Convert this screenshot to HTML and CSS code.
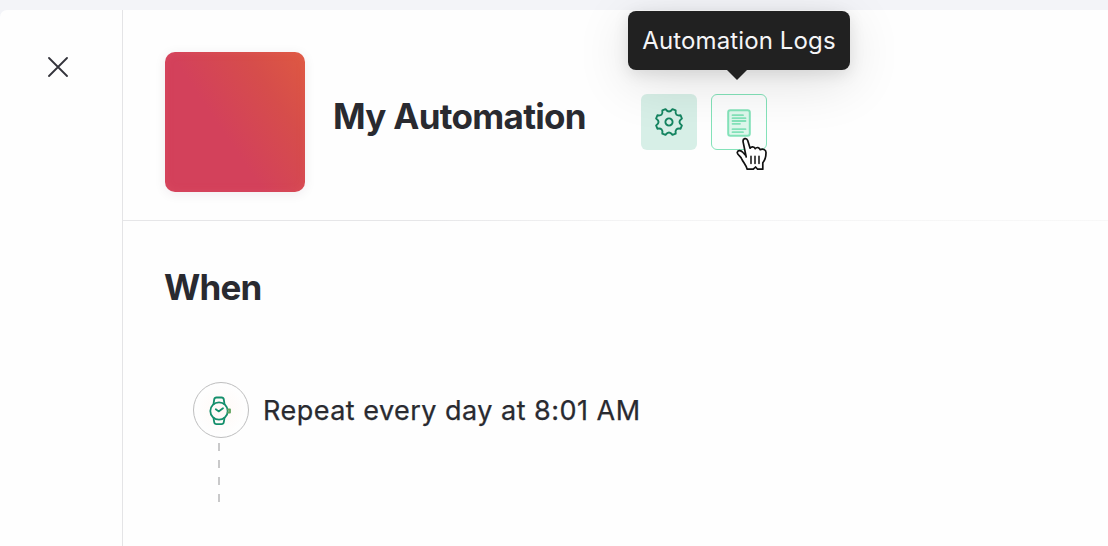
FILE: index.html
```
<!DOCTYPE html>
<html lang="en">
<head>
<meta charset="utf-8">
<title>My Automation</title>
<link rel="stylesheet" href="styles.css">
</head>
<body>
<div class="panel">
  <aside class="sidebar">
    <button class="close" aria-label="Close">
      <svg width="20" height="20" viewBox="0 0 20 20"><path d="M1 1L19 19M19 1L1 19"/></svg>
    </button>
  </aside>
  <main class="content">
    <header class="header">
      <div class="cover"></div>
      <h1 class="title">My Automation</h1>
      <div class="actions">
        <button class="action action-settings" aria-label="Settings">
          <svg width="30" height="30" viewBox="-15 -15 30 30"><path d="M12.9 3.5L11.6 6.7Q5.7 5.7 6.7 11.6L3.5 12.9Q0 8 -3.5 12.9L-6.7 11.6Q-5.7 5.7 -11.6 6.7L-12.9 3.5Q-8 0 -12.9 -3.5L-11.6 -6.7Q-5.7 -5.7 -6.7 -11.6L-3.5 -12.9Q0 -8 3.5 -12.9L6.7 -11.6Q5.7 -5.7 11.6 -6.7L12.9 -3.5Q8 0 12.9 3.5Z"/><circle r="3.6"/></svg>
        </button>
        <button class="action action-logs" aria-label="Automation Logs">
          <svg width="24" height="28" viewBox="0 0 24 28"><rect x="1.2" y="1.2" width="21.6" height="25.6" rx="2.2"/><path d="M5.5 6.2H16M5.5 9.2H18.5M5.5 12H18.5M5.5 14.8H13M5.5 20.2H18.5M5.5 23.2H16"/></svg>
        </button>
        <div class="tooltip" role="tooltip">Automation Logs</div>
        <svg class="cursor" width="34" height="36" viewBox="0 0 34 36"><path d="M10.2 20L7.1 4.8C6.5 1.2 10.6 .4 11.7 3.5L14.1 11.2C15.2 9.4 18.3 9.4 19.2 11.7C20.7 9.7 23.5 10.4 24.2 12.7C26.5 11.3 30.2 12.7 30 15.7C30 20.6 29.2 22.8 26.8 25.8V32.2H21.6L19.6 30L17.3 32.2H11.2C10.2 28.2 7.4 25.6 5.7 21.8C4.7 19.4 1.2 17.8 1.2 15.5C2 12.8 5 13.3 7 15.5L9.7 18.3"/><path class="cursor-lines" d="M15 19.2V26.4M19 19.2V26.4M23 19.2V26.4"/></svg>
      </div>
    </header>
    <section class="trigger">
      <h2 class="heading">When</h2>
      <div class="step">
        <div class="step-icon">
          <svg width="24" height="30" viewBox="0 0 24 30"><circle cx="11" cy="15" r="8.7"/><path d="M5.5 8.2L6.2 3.5Q6.5 1.5 8.5 1.5H13.5Q15.5 1.5 15.8 3.5L16.5 8.2M5.5 21.8L6.2 26.2Q6.5 28.2 8.5 28.2H13.5Q15.5 28.2 15.8 26.2L16.5 21.8"/><path d="M7.8 13.2L10.6 15.4L15 12.2"/><path class="crown" d="M20 13.5H22V16.5H20"/></svg>
        </div>
        <p class="step-label">Repeat every day at 8:01 AM</p>
      </div>
      <div class="connector"></div>
    </section>
  </main>
</div>
</body>
</html>
```

FILE: styles.css
```
* { box-sizing: border-box; }

body {
  margin: 0;
  height: 546px;
  padding-top: 10px;
  overflow: hidden;
  background: #f3f4f8;
  color: #292a30;
  font-family: Inter, "Liberation Sans", sans-serif;
}

h1, h2, p { margin: 0; }

button {
  padding: 0;
  border: 0;
  background: none;
}

svg {
  display: block;
  fill: none;
  stroke-linecap: round;
  stroke-linejoin: round;
}

.panel {
  display: flex;
  height: 536px;
  border-radius: 7px 0 0 0;
  background: #fefefe;
}

.sidebar {
  width: 123px;
  padding: 47px 0 0 48px;
  border-right: 1px solid #e4e4e6;
}

.close svg { stroke: #33333b; stroke-width: 1.8; }

.content { flex: 1; }

.header {
  display: flex;
  height: 211px;
  padding: 42px 0 0 42px;
  border-bottom: 1px solid;
  border-image: linear-gradient(90deg, #e6e6e8 0 30%, #f3f3f4 50%, #f8f8f8) 1;
}

.cover {
  width: 140px;
  height: 140px;
  border-radius: 10px;
  background: linear-gradient(56deg, #d3415b 42%, #d64d4b 74%, #de5942);
  box-shadow: 0 2px 12px rgba(60, 30, 70, .08), inset 0 0 10px rgba(255, 120, 120, .14);
}

.title {
  width: 308px;
  padding: 42px 0 0 28px;
  font-size: 35px;
  font-weight: 700;
  line-height: 44px;
  letter-spacing: -.7px;
  white-space: nowrap;
}

.actions {
  position: relative;
  display: flex;
  gap: 14px;
  height: 56px;
  margin: 42px 0 0 28px;
}

.action {
  display: flex;
  align-items: center;
  justify-content: center;
  width: 56px;
  height: 56px;
  border-radius: 6px;
}

.action-settings { background: #d7efe7; }
.action-settings svg { stroke: #148460; stroke-width: 1.9; }
.action-logs { border: 1px solid #83e2b9; background: #fcfdfd; }
.action-logs svg { margin-top: 2px; stroke: #83e2b9; stroke-width: 1.8; }
.action-logs rect { fill: #def7ec; stroke-width: 2; }

.tooltip {
  position: absolute;
  left: -13px;
  top: -83px;
  width: 222px;
  height: 59px;
  border-radius: 8px;
  background: #212121;
  box-shadow: 0 12px 54px rgba(0, 0, 0, .12), 0 4px 16px rgba(0, 0, 0, .1);
  color: #f5f5f7;
  font-size: 24px;
  line-height: 59px;
  letter-spacing: .12px;
  text-align: center;
  white-space: nowrap;
}

.tooltip::after {
  content: "";
  position: absolute;
  left: 98px;
  top: 58px;
  border: 11px solid transparent;
  border-top-color: #212121;
  border-bottom: 0;
}

.cursor {
  position: absolute;
  left: 95px;
  top: 43px;
  fill: #fff;
  stroke: #111;
  stroke-width: 1.7;
}

.cursor-lines { stroke-width: 1.5; }

.trigger { padding: 44px 0 0 41px; }

.heading {
  font-size: 35px;
  font-weight: 700;
  line-height: 44px;
  letter-spacing: -.8px;
}

.step {
  display: flex;
  align-items: center;
  gap: 14px;
  margin: 73px 0 0 29px;
}

.step-icon {
  display: flex;
  align-items: center;
  justify-content: center;
  width: 56px;
  height: 56px;
  padding: 2px 2px 0 0;
  border: 1px solid #bebebf;
  border-radius: 50%;
  background: radial-gradient(#fff9f6, #fefefe 65%);
}

.step-icon svg { stroke: #148f6c; stroke-width: 1.8; }
.step-icon .crown { stroke: #5fa35d; }

.step-label {
  padding-top: 2px;
  font-size: 27px;
  font-weight: 400;
  line-height: 36px;
  letter-spacing: .48px;
  white-space: nowrap;
  -webkit-text-stroke: .25px;
}

.connector {
  width: 2px;
  height: 59px;
  margin: 5px 0 0 54px;
  background: repeating-linear-gradient(#c9c9ca 0 8px, transparent 8px 17px);
}
```
